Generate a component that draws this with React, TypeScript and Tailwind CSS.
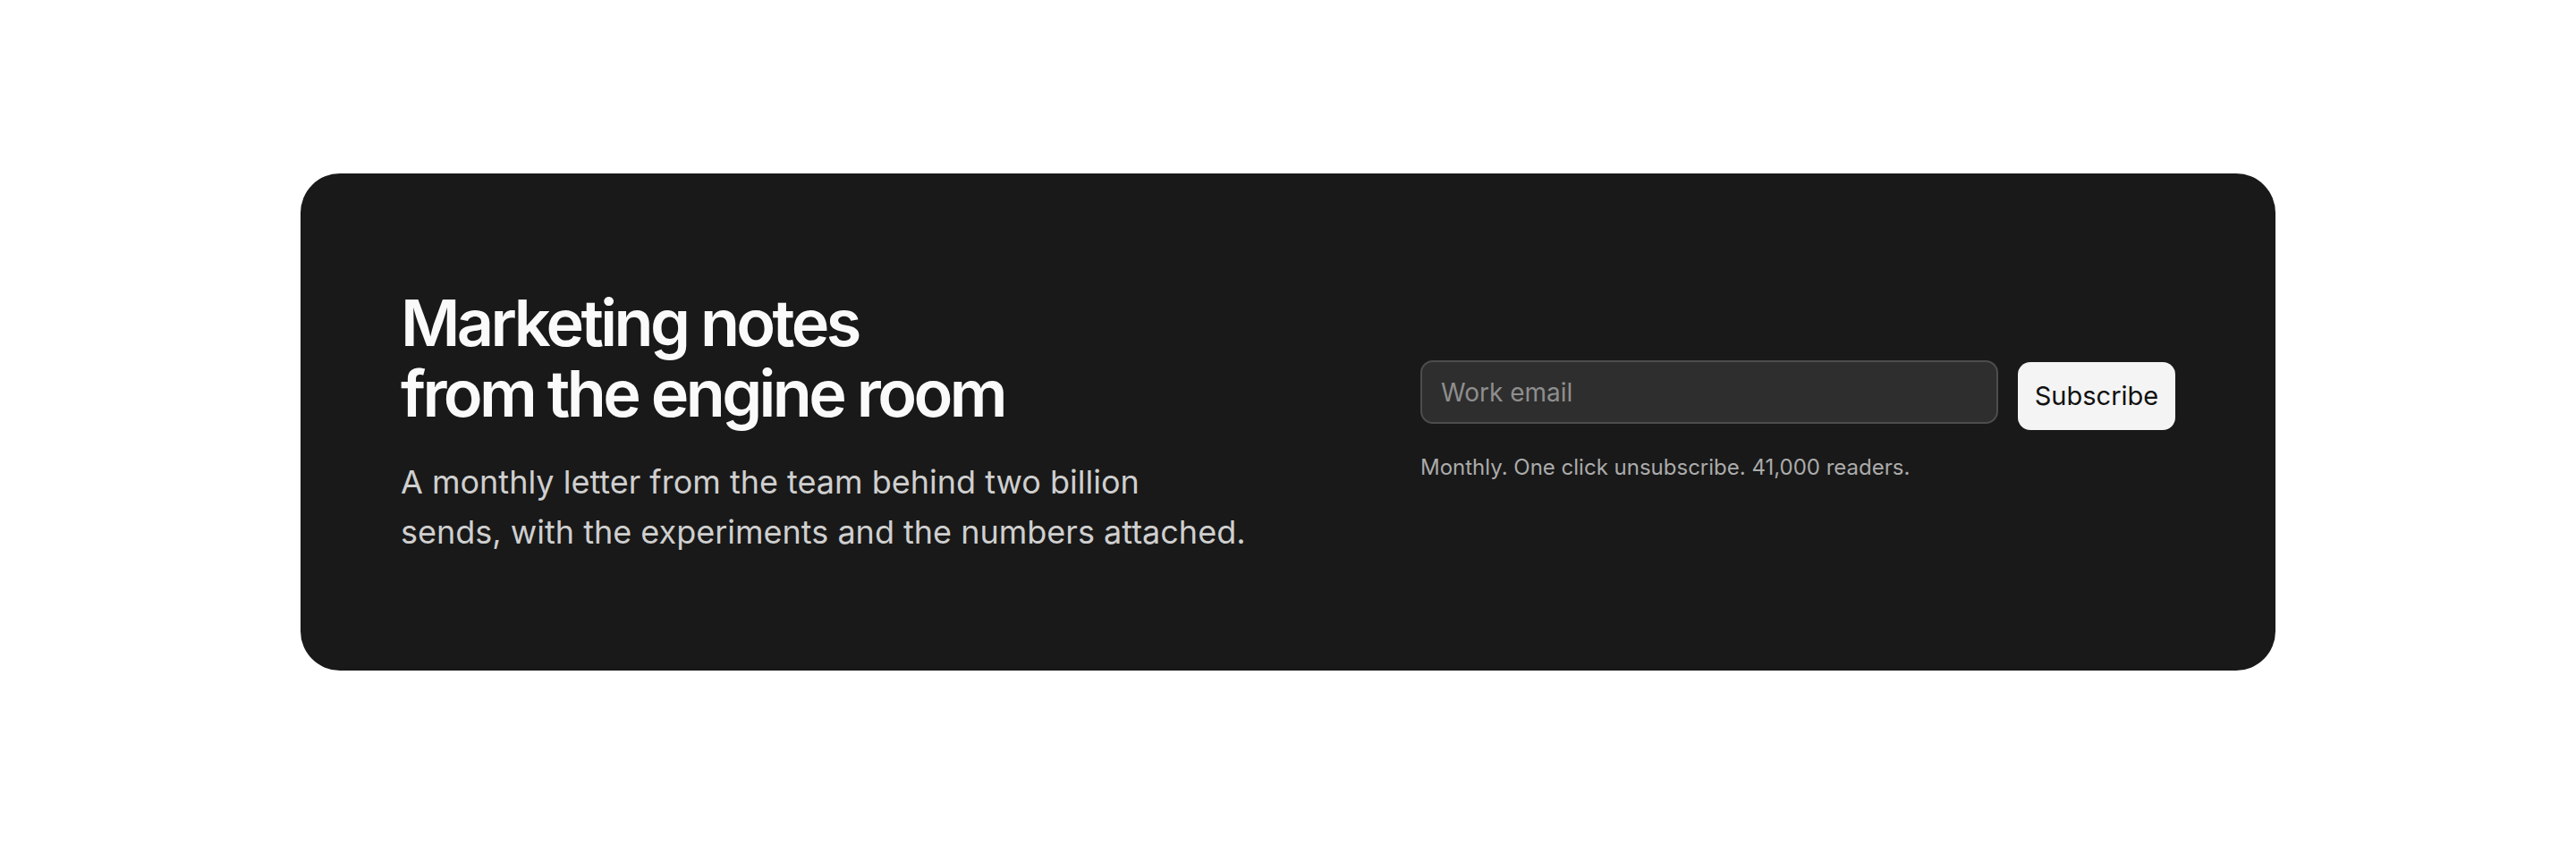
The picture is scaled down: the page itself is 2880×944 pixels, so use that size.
export default function App() {
  return (
    <main className="flex min-h-screen items-center justify-center bg-white font-['Inter',sans-serif]">
      <section className="flex w-[2208px] items-center justify-between rounded-[44px] bg-[#191919] px-28 py-[127px]">
        <div>
          <h1 className="text-[72px] font-semibold leading-[1.1] tracking-[-0.05em] text-[#fafafa]">
            Marketing notes
            <br />
            from the engine room
          </h1>
          <p className="mt-8 text-[36px] leading-[56px] text-[#cfcfcf]">
            A monthly letter from the team behind two billion
            <br />
            sends, with the experiments and the numbers attached.
          </p>
        </div>

        <div className="w-[844px]">
          <form className="flex items-start gap-[22px] text-[29px]" onSubmit={(e) => e.preventDefault()}>
            <input
              type="email"
              placeholder="Work email"
              className="h-[71px] min-w-0 flex-1 rounded-[14px] border-2 border-[#4d4d4d] bg-[#2e2e2e] px-[21px] text-[28px] text-white outline-none placeholder:text-[#8e8e8e]"
            />
            <button
              type="submit"
              className="mt-[2px] h-[76px] w-[176px] rounded-[14px] bg-[#f4f4f4] font-normal text-[#111111]"
            >
              Subscribe
            </button>
          </form>
          <p className="mt-6 text-[24px] leading-9 text-[#ababab]">
            Monthly. One click unsubscribe. 41,000 readers.
          </p>
        </div>
      </section>
    </main>
  )
}
